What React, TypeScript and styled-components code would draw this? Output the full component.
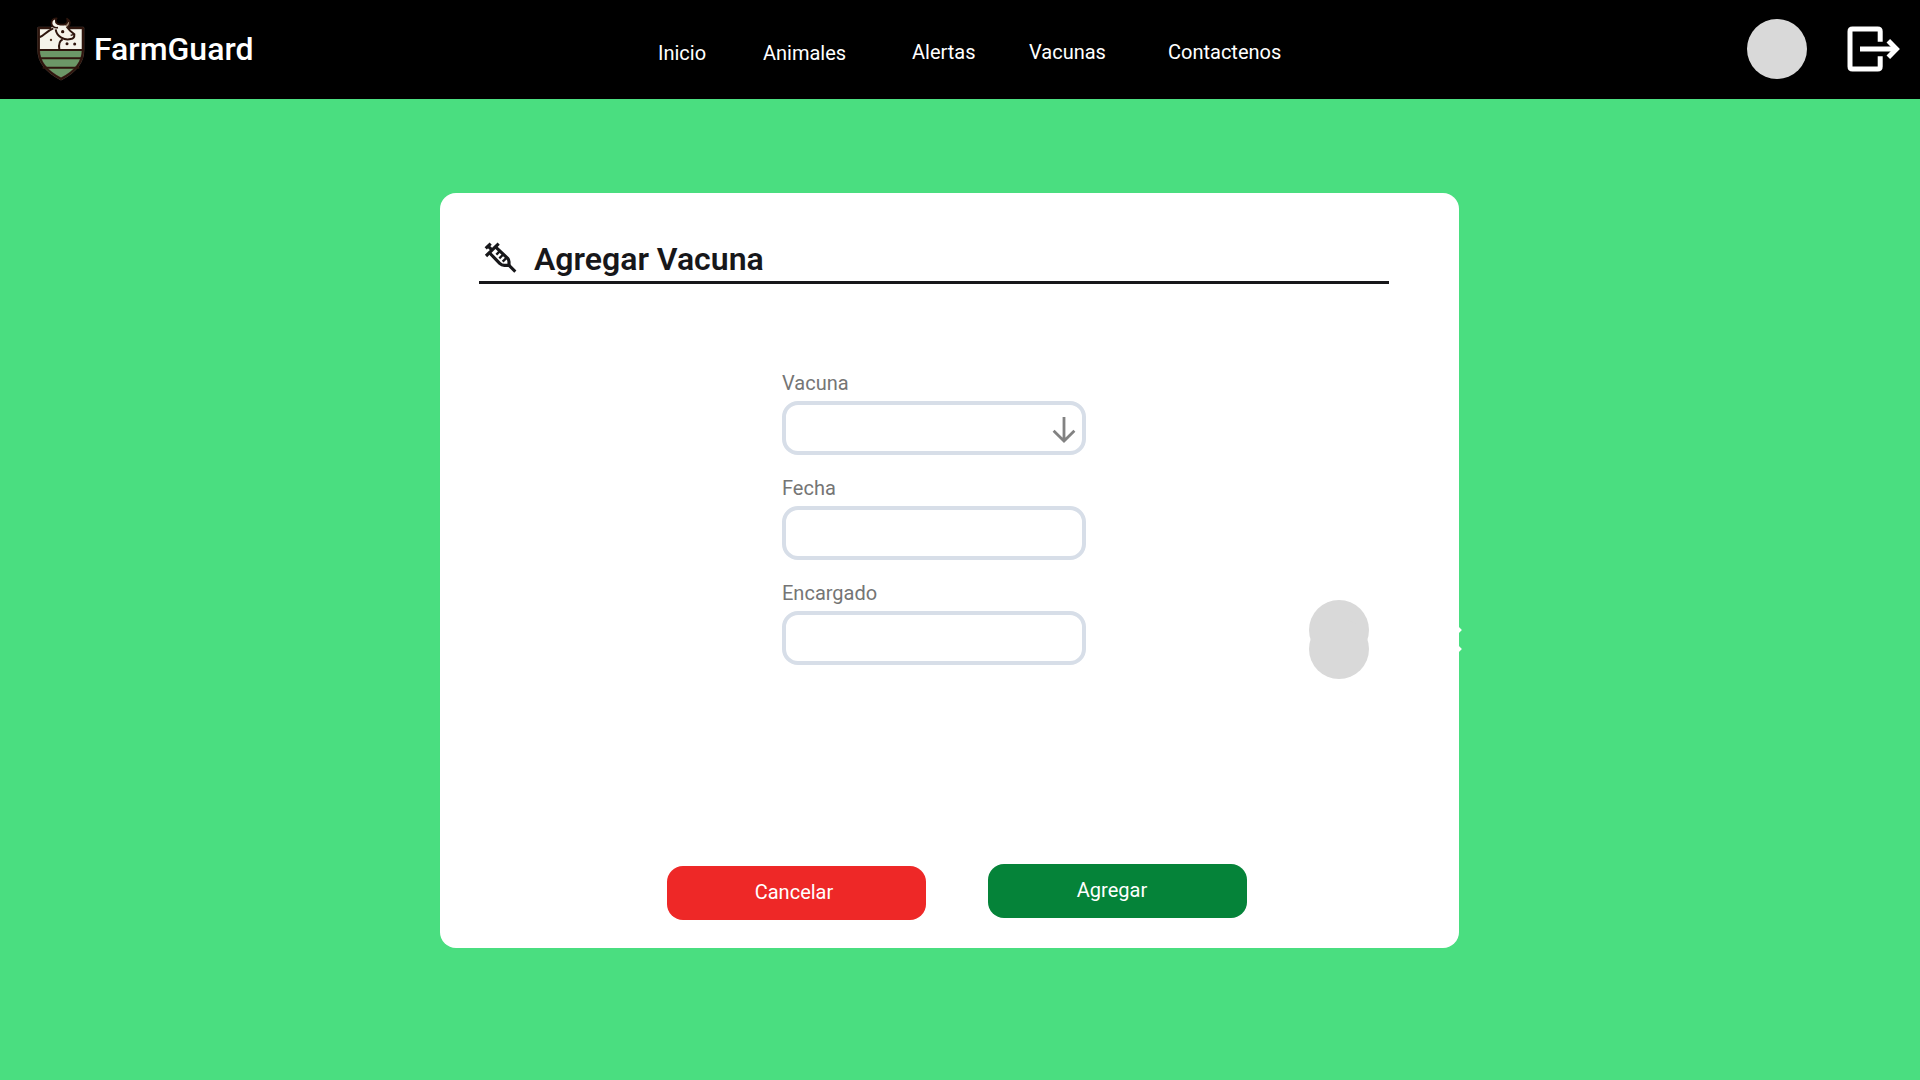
import React from "react";
import styled, { createGlobalStyle } from "styled-components";

const GlobalStyle = createGlobalStyle`
  * { box-sizing: border-box; }
  body {
    margin: 0;
    background: #4ade80;
    font-family: Roboto, "Liberation Sans", sans-serif;
  }
`;

const Page = styled.div`
  width: 1920px;
  height: 1080px;
  overflow: hidden;
  background: #4ade80;
`;

const Header = styled.header`
  display: flex;
  height: 99px;
  background: #000;
  color: #fff;
`;

const Brand = styled.div`
  display: flex;
  width: 658px;
  padding-left: 30px;
`;

const BrandName = styled.span`
  padding: 30px 0 0;
  font-size: 32px;
  line-height: 38px;
  font-weight: 500;
`;

const Nav = styled.nav`
  display: grid;
  grid-template-columns: 105px 149px 117px 139px 579px;
  align-items: start;
`;

const NavLink = styled.a<{ $top: number }>`
  padding-top: ${(p) => p.$top}px;
  font-size: 20px;
  line-height: 24px;
  color: #fff;
`;

const Avatar = styled.div`
  width: 60px;
  height: 60px;
  border-radius: 50%;
  background: #d9d9d9;
`;

const Account = styled.div`
  display: flex;
  align-items: flex-start;
  gap: 37px;
  padding-top: 19px;
`;

const LogoutSvg = styled.svg`
  display: block;
  width: 60px;
  height: 60px;
  flex: none;
`;

const Main = styled.main`
  padding: 94px 0 0 440px;
`;

const Card = styled.section`
  position: relative;
  display: flex;
  flex-direction: column;
  width: 1019px;
  height: 755px;
  border-radius: 16px;
  background: #fff;
`;

const Title = styled.div`
  display: flex;
  width: 910px;
  height: 91px;
  margin-left: 39px;
  border-bottom: 3px solid #17171a;
`;

const TitleText = styled.h1`
  margin: 0;
  padding: 47px 0 0 14px;
  font-size: 32px;
  line-height: 38px;
  font-weight: 600;
  color: #17171a;
`;

const SyringeSvg = styled.svg`
  width: 40px;
  height: 40px;
  margin: 45px 0 0 1px;
`;

const Form = styled.form`
  display: flex;
  flex-direction: column;
  gap: 21px;
  width: 304px;
  margin: 87px 0 0 342px;
`;

const Field = styled.label`
  display: flex;
  flex-direction: column;
  gap: 6px;
  font-size: 20px;
  line-height: 24px;
  color: #757575;
`;

const Box = styled.span`
  display: flex;
  justify-content: flex-end;
  height: 54px;
  padding: 12px 5px 0 0;
  border: 4px solid #d7dee8;
  border-radius: 16px;
`;

const ArrowSvg = styled.svg`
  width: 26px;
  height: 28px;
`;

const Actions = styled.div`
  display: flex;
  align-items: flex-start;
  gap: 62px;
  margin: auto 0 28px 227px;
`;

const Button = styled.button<{ $color: string; $drop: number; $shift: number }>`
  width: 259px;
  height: 54px;
  margin: ${(p) => p.$drop}px 0 ${(p) => 2 - p.$drop}px;
  padding: 0 ${(p) => p.$shift}px 2px 0;
  border: 0;
  border-radius: 16px;
  background: ${(p) => p.$color};
  color: #fff;
  font: 400 20px/24px Roboto, "Liberation Sans", sans-serif;
`;

const FloatingAccount = styled.div<{ $top: number }>`
  position: absolute;
  left: 869px;
  top: ${(p) => p.$top}px;
  display: flex;
  gap: 37px;
`;

const LogoSvg = styled.svg`
  width: 64px;
  height: 76px;
  margin-top: 10px;
`;

const Logo = () => (
  <LogoSvg viewBox="0 0 192 228">
    <path d="M26 54H159V120C159 163 130 188 93 207C57 188 26 163 26 120Z" fill="#f5f3ea" />
    <path d="M26 118H159C159 163 130 188 93 207C57 188 26 163 26 118Z" fill="#6c9767" />
    <path d="M26 54H159V120C159 163 130 188 93 207C57 188 26 163 26 120Z" fill="none" stroke="#54443d" strokeWidth="8" strokeLinejoin="round" />
    <path d="M26 54H159V120C159 163 130 188 93 207C57 188 26 163 26 120Z" fill="none" stroke="#2e150d" strokeWidth="6" strokeLinejoin="round" />
    <path d="M26 120H159M27 145H158M38 173H148" stroke="#2e150d" strokeWidth="6" />
    <path d="M64 52L82 46L108 45L120 60L133 73Q134 86 122 87C104 92 82 80 78 60L64 60Z" fill="#f5f3ea" />
    <path d="M110 50L120 62L133 73Q134 86 122 87C104 92 80 80 77 58" fill="none" stroke="#2e150d" strokeWidth="6" />
    <path d="M84 53C72 55 62 46 65 35Q68 25 80 25C73 34 78 43 91 44H103" fill="#f5f3ea" stroke="#2e150d" strokeWidth="5" strokeLinejoin="round" />
    <path d="M103 44C112 42 115 34 111 26C122 32 123 43 112 53" fill="#a08c78" stroke="#2e150d" strokeWidth="5" strokeLinejoin="round" />
    <path d="M28 82C43 78 48 64 70 55" fill="none" stroke="#2e150d" strokeWidth="6" />
    <path d="M88 118C86 105 89 92 98 88" fill="none" stroke="#2e150d" strokeWidth="6" />
    <circle cx="98" cy="65" r="5" fill="#2e150d" />
    <path d="M122 76L132 73" stroke="#2e150d" strokeWidth="4" />
    <circle cx="63" cy="90" r="3.5" fill="#4a2a18" />
    <circle cx="111" cy="101" r="4.5" fill="#2e150d" />
    <circle cx="134" cy="102" r="4.5" fill="#2e150d" />
  </LogoSvg>
);

const LogoutIcon = () => (
  <LogoutSvg viewBox="0 0 60 60" fill="none" stroke="#fff" strokeWidth="5">
    <path d="M36.2 22.8V12.5Q36.2 10 33.7 10H8.5Q6 10 6 12.5V47.5Q6 50 8.5 50H33.7Q36.2 50 36.2 47.5V37.2" />
    <path d="M16 30H52" />
    <path d="M44.3 21.8L52.4 30L44.3 38.2" />
  </LogoutSvg>
);

const SyringeIcon = () => (
  <SyringeSvg viewBox="0 0 120 120" fill="none" stroke="#17171a" strokeWidth="9.5">
    <path d="M17 31L32 17M23 23L37 37M18 54L56 17" />
    <path d="M29 45L59 76Q65 82 73 82H87V71Q87 66 83 61L48 28" />
    <path d="M61 38L49 50M71 48L58 61M81 58L68 71" strokeWidth="7" />
    <path d="M85 80L106 101" strokeWidth="9" />
  </SyringeSvg>
);

const fields = ["Vacuna", "Fecha", "Encargado"];
const links = [
  { label: "Inicio", top: 41 },
  { label: "Animales", top: 41 },
  { label: "Alertas", top: 40 },
  { label: "Vacunas", top: 40 },
  { label: "Contactenos", top: 40 },
];

export default function App() {
  return (
    <>
      <GlobalStyle />
      <Page>
        <Header>
          <Brand>
            <Logo />
            <BrandName>FarmGuard</BrandName>
          </Brand>
          <Nav>
            {links.map((link) => (
              <NavLink key={link.label} $top={link.top}>
                {link.label}
              </NavLink>
            ))}
          </Nav>
          <Account>
            <Avatar />
            <LogoutIcon />
          </Account>
        </Header>
        <Main>
          <Card>
            <Title>
              <SyringeIcon />
              <TitleText>Agregar Vacuna</TitleText>
            </Title>
            <Form>
              {fields.map((name) => (
                <Field key={name}>
                  {name}
                  <Box>
                    {name === "Vacuna" && (
                      <ArrowSvg viewBox="0 0 26 28" fill="none" stroke="#828282" strokeWidth="2.8">
                        <path d="M13 0V24.5M2.6 13.8L13 24L23.4 13.8" />
                      </ArrowSvg>
                    )}
                  </Box>
                </Field>
              ))}
            </Form>
            <Actions>
              <Button $color="#ee2827" $drop={2} $shift={5}>Cancelar</Button>
              <Button $color="#058339" $drop={0} $shift={11}>Agregar</Button>
            </Actions>
            <FloatingAccount $top={407}>
              <Avatar />
              <LogoutIcon />
            </FloatingAccount>
            <FloatingAccount $top={426}>
              <Avatar />
              <LogoutIcon />
            </FloatingAccount>
          </Card>
        </Main>
      </Page>
    </>
  );
}
